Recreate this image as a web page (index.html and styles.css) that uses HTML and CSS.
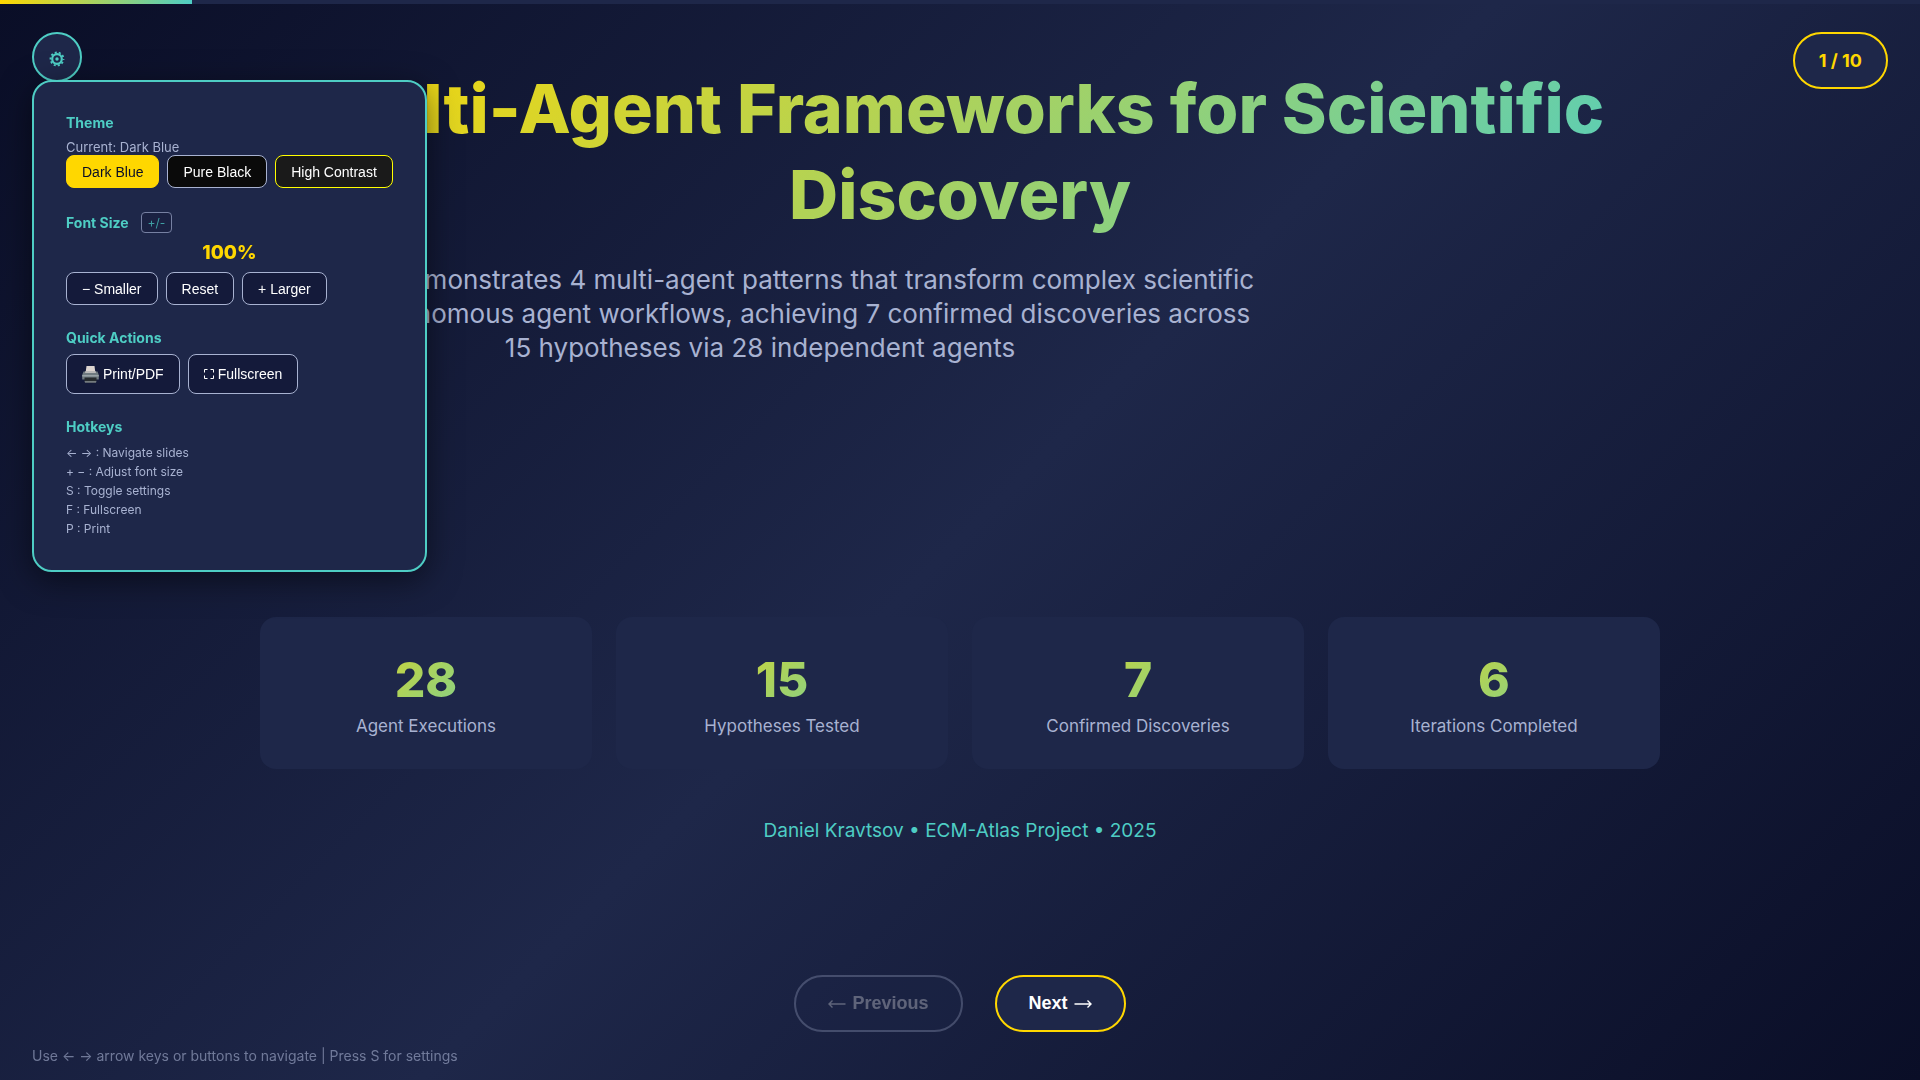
FILE: index.html
```html
<!DOCTYPE html>
<html lang="en">
<head>
<meta charset="utf-8">
<meta name="viewport" content="width=device-width, initial-scale=1">
<title>Multi-Agent Frameworks for Scientific Discovery</title>
<link rel="stylesheet" href="styles.css">
</head>
<body>
<div class="progress"><div class="progress-fill" style="width:10%"></div></div>

<main class="slide">
  <header class="hero">
    <h1 class="title">Multi-Agent Frameworks for Scientific Discovery</h1>
    <p class="subtitle">This work demonstrates 4 multi-agent patterns that transform complex scientific<br>data to autonomous agent workflows, achieving 7 confirmed discoveries across<br>15 hypotheses via 28 independent agents</p>
  </header>
  <section class="stats" aria-label="Key results">
    <div class="stat"><div class="stat-value">28</div><div class="stat-label">Agent Executions</div></div>
    <div class="stat"><div class="stat-value">15</div><div class="stat-label">Hypotheses Tested</div></div>
    <div class="stat"><div class="stat-value">7</div><div class="stat-label">Confirmed Discoveries</div></div>
    <div class="stat"><div class="stat-value">6</div><div class="stat-label">Iterations Completed</div></div>
  </section>
  <p class="author">Daniel Kravtsov • ECM-Atlas Project • 2025</p>
</main>

<footer class="footer">
  <nav class="nav" aria-label="Slides">
    <button class="nav-button" type="button" disabled>
      <svg class="arrow" viewBox="0 0 18 10" aria-hidden="true"><path d="M4.500 1.500L1 5L4.500 8.500M1 5H17.500"/></svg>
      <span>Previous</span>
    </button>
    <button class="nav-button" type="button">
      <span>Next</span>
      <svg class="arrow" viewBox="0 0 18 10" aria-hidden="true"><path d="M13.500 1.500L17 5L13.500 8.500M.500 5H17"/></svg>
    </button>
  </nav>
  <p class="hint">Use ← → arrow keys or buttons to navigate | Press S for settings</p>
</footer>

<div class="counter">1 / 10</div>

<button class="gear-button" type="button" aria-label="Settings" aria-expanded="true">
  <svg class="gear" viewBox="0 0 16 16" aria-hidden="true">
    <circle cx="8" cy="8" r="4.800" stroke-width="2.200"/>
    <circle cx="8" cy="8" r="1.700" fill="currentColor" stroke="none"/>
    <circle cx="8" cy="8" r="6.500" stroke-width="1.800" stroke-dasharray="2.040 2.044" stroke-dashoffset="1.020"/>
  </svg>
</button>

<aside class="panel" aria-label="Settings panel">
  <section>
    <h2 class="panel-heading">Theme</h2>
    <p class="current">Current: Dark Blue</p>
    <div class="options">
      <button class="option option-active" type="button">Dark Blue</button>
      <button class="option option-black" type="button">Pure Black</button>
      <button class="option option-contrast" type="button">High Contrast</button>
    </div>
  </section>
  <section>
    <h2 class="panel-heading">Font Size <kbd class="key">+/-</kbd></h2>
    <p class="scale">100%</p>
    <div class="options">
      <button class="option" type="button">− Smaller</button>
      <button class="option" type="button">Reset</button>
      <button class="option" type="button">+ Larger</button>
    </div>
  </section>
  <section>
    <h2 class="panel-heading">Quick Actions</h2>
    <div class="options options-tall">
      <button class="option" type="button">
        <svg class="printer" viewBox="0 0 17 17" aria-hidden="true">
          <path d="M4.500 0h8l.8 6H3.700z" fill="#ddd5d0"/>
          <path d="M1.500 5.500h14l1.300 3.500v4.500H.2V9z" fill="#6f7a80"/>
          <path d="M3.500 5h10l.5 2H3z" fill="#b9b8b8"/>
          <path d="M.2 9h16.600v1.500H.2z" fill="#98a2a6"/>
          <path d="M2.500 11.500h12V15h-12z" fill="#262b2e"/>
          <path d="M2.500 15h12l-.5 1.700H3z" fill="#747b7e"/>
        </svg>
        <span>Print/PDF</span>
      </button>
      <button class="option" type="button">
        <svg class="frame" viewBox="0 0 10 10" aria-hidden="true"><path d="M.500 3.500v-3h3M6.500.500h3v3M9.500 6.500v3h-3M3.500 9.500h-3v-3"/></svg>
        <span>Fullscreen</span>
      </button>
    </div>
  </section>
  <section>
    <h2 class="panel-heading">Hotkeys</h2>
    <ul class="hotkeys">
      <li>← → : Navigate slides</li>
      <li>+ − : Adjust font size</li>
      <li>S : Toggle settings</li>
      <li>F : Fullscreen</li>
      <li>P : Print</li>
    </ul>
  </section>
</aside>
</body>
</html>
```
FILE: styles.css
```css
:root {
  --deep: #0a0e27;
  --card: #1e2749;
  --field: #141a3a;
  --gold: #ffd700;
  --teal: #4ecdc4;
  --muted: #a8b2d1;
  --accent: linear-gradient(135deg, var(--gold), var(--teal));
}

* { box-sizing: border-box; margin: 0; padding: 0; }

body {
  display: flex;
  flex-direction: column;
  min-height: 100vh;
  background: linear-gradient(135deg, var(--deep) 0%, var(--card) 50%, var(--deep) 100%);
  color: #fff;
  font-family: Inter, "Liberation Sans", sans-serif;
}

button { font-family: "Liberation Sans", Arial, sans-serif; color: #fff; cursor: pointer; }

.progress { height: 4px; background: var(--card); }
.progress-fill { height: 100%; background: linear-gradient(90deg, var(--gold), var(--teal)); }

.slide {
  display: flex;
  flex: 1;
  flex-direction: column;
  width: 100%;
  max-width: 1400px;
  margin: 0 auto;
  padding-top: 61px;
}

.title {
  margin-bottom: 26px;
  background: var(--accent);
  background-clip: text;
  -webkit-background-clip: text;
  color: transparent;
  font-size: 68px;
  font-weight: 800;
  line-height: 86px;
  text-align: center;
}

.subtitle {
  max-width: 1000px;
  color: var(--muted);
  font-size: 26px;
  line-height: 34px;
  text-align: center;
}

.stats {
  display: grid;
  grid-template-columns: repeat(4, 1fr);
  gap: 24px;
  margin-top: auto;
}

.stat {
  padding: 32px 24px;
  border-radius: 16px;
  background: var(--card);
  text-align: center;
}

.stat-value {
  margin-bottom: 4px;
  background: var(--accent);
  background-clip: text;
  -webkit-background-clip: text;
  color: transparent;
  font-size: 48px;
  font-weight: 800;
  line-height: 62px;
}

.stat-label { color: var(--muted); font-size: 17px; line-height: 22px; }

.author {
  margin: 49px 0 131px;
  color: var(--teal);
  font-size: 19px;
  line-height: 26px;
  text-align: center;
}

.nav { display: flex; justify-content: center; gap: 32px; }

.nav-button {
  display: flex;
  align-items: center;
  gap: 6px;
  height: 57px;
  padding: 0 32px;
  border: 2px solid var(--gold);
  border-radius: 29px;
  background: var(--card);
  font-size: 18px;
  font-weight: 700;
}

.nav-button:disabled { border-color: var(--muted); background: var(--card); opacity: .3; cursor: default; }

.arrow { width: 18px; height: 10px; fill: none; stroke: currentColor; stroke-width: 1.400; }

.hint {
  padding: 15px 32px 16px;
  color: var(--muted);
  font-size: 14px;
  line-height: 17px;
  opacity: .6;
}

.counter {
  position: fixed;
  top: 32px;
  right: 32px;
  padding: 16px 24px;
  border: 2px solid var(--gold);
  border-radius: 29px;
  background: var(--card);
  color: var(--gold);
  font-size: 18px;
  font-weight: 700;
  line-height: 21px;
}

.gear-button {
  position: fixed;
  top: 32px;
  left: 32px;
  display: grid;
  place-items: center;
  width: 50px;
  height: 50px;
  padding-top: 3px;
  border: 2px solid var(--teal);
  border-radius: 50%;
  background: var(--card);
  color: var(--teal);
}

.gear { width: 16px; height: 16px; fill: none; stroke: currentColor; }

.panel {
  position: fixed;
  top: 80px;
  left: 32px;
  display: flex;
  flex-direction: column;
  gap: 24px;
  padding: 32px;
  border: 2px solid var(--teal);
  border-radius: 20px;
  background: var(--card);
  box-shadow: 0 8px 32px rgba(0, 0, 0, .5);
}

.panel-heading {
  display: flex;
  align-items: center;
  gap: 12px;
  margin-bottom: 8px;
  color: var(--teal);
  font-size: 14px;
  font-weight: 700;
  line-height: 17px;
}

.key {
  padding: 1px 6px;
  border: 1px solid #7680a2;
  border-radius: 4px;
  background: #1a2142;
  color: #3f9fa3;
  font-family: inherit;
  font-size: 12px;
  font-weight: 400;
  line-height: 17px;
}

.current { color: var(--muted); font-size: 13px; line-height: 16px; }

.scale {
  margin-bottom: 8px;
  color: var(--gold);
  font-size: 19px;
  font-weight: 800;
  line-height: 23px;
  text-align: center;
}

.options { display: flex; gap: 8px; }

.option {
  display: flex;
  align-items: center;
  justify-content: center;
  gap: 4px;
  height: 33px;
  padding: 0 15px;
  border: 1px solid var(--muted);
  border-radius: 8px;
  background: var(--field);
  font-size: 14px;
  font-weight: 400;
  white-space: nowrap;
}

.options-tall .option { height: 40px; }
.option-active { border-color: var(--gold); background: var(--gold); color: var(--deep); }
.option-black { background: #0a0a0a; }
.option-contrast { border-color: #ff0; background: #1a1a1a; }

.printer { width: 17px; height: 17px; }
.frame { width: 10px; height: 10px; fill: none; stroke: currentColor; }

.hotkeys { color: var(--muted); font-size: 12px; line-height: 19px; list-style: none; }
```
